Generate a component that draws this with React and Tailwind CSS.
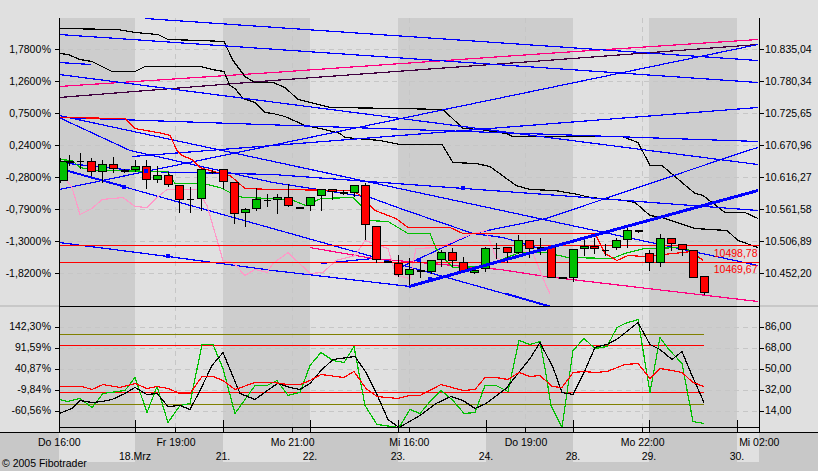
import React from 'react';

const RED = '#ff0000';
const BLUE = '#0000ff';
const GREEN = '#00c000';

// day bands behind the plot, width + shade
const bands = [
  { w: 76, d: true },
  { w: 88, d: false },
  { w: 87, d: true },
  { w: 88, d: false },
  { w: 175, d: true },
  { w: 76, d: false },
  { w: 88, d: true },
  { w: 22, d: false },
];

// same days on the time axis, shade is flipped there
const axisDays = [
  { w: 76, d: false, t: '18.Mrz' },
  { w: 88, d: true, t: '21.' },
  { w: 87, d: false, t: '22.' },
  { w: 88, d: true, t: '23.' },
  { w: 88, d: false, t: '24.' },
  { w: 87, d: true, t: '28.' },
  { w: 76, d: false, t: '29.' },
  { w: 88, d: true, t: '30.' },
  { w: 22, d: false, t: '' },
];

const times = ['Do 16:00', 'Fr 19:00', 'Mo 21:00', 'Mi 16:00', 'Do 19:00', 'Mo 22:00', 'Mi 02:00'];

const leftTop = ['1,7800 %', '1,2600 %', '0,7500 %', '0,2400 %', '-0,2800 %', '-0,7900 %', '-1,3000 %', '-1,8200 %'];
const rightTop = ['10.835,04', '10.780,34', '10.725,65', '10.670,96', '10.616,27', '10.561,58', '10.506,89', '10.452,20'];
const leftBottom = ['142,30 %', '91,59 %', '40,87 %', '-9,84 %', '-60,56 %'];
const rightBottom = ['86,00', '68,00', '50,00', '32,00', '14,00'];

const gridTop = [49, 81, 113, 145, 177, 209, 241, 273];
const gridBottom = [327, 348, 369, 390, 411];
const gridX = [175, 292, 409, 525, 642];
const dayX = [135, 223, 310, 398, 486, 573, 649, 737];

const blueThin = [
  [[145, 18], [758, 60.5]],
  [[59, 34], [758, 82]],
  [[59, 62], [91, 64.5]],
  [[59, 74.5], [758, 164.5]],
  [[59, 117], [758, 141.5]],
  [[59, 115], [758, 265]],
  [[59, 117], [130, 150], [273, 182], [370, 197], [406, 210], [473, 233], [503, 237], [546, 250]],
  [[59, 162], [143, 171.5], [273, 174], [546, 194], [758, 210.7]],
  [[59, 189], [758, 44.5]],
  [[132, 156], [758, 107.3]],
  [[398, 268], [473, 233], [546, 218], [748, 150], [758, 147]],
  [[321, 263], [373, 258]],
  [[59, 242], [168, 256], [273, 270], [410, 286]],
  [[59, 168], [550, 306]],
];
const blueMid = [
  [[59, 168], [124, 186]],
  [[505, 293.5], [550, 306]],
];
const blueThick = [[[409, 286], [546, 248], [758, 190]]];
const markers = [[124, 187], [146, 171], [168, 256], [419, 260], [430, 279], [463, 188]];

const black1 = [[59, 28], [118, 29], [135, 32], [158, 34], [168, 39], [200, 40], [224, 41.5], [233, 60], [245, 76], [255, 82], [273, 82], [285, 87], [298, 99], [330, 107], [400, 108], [443, 109], [463, 128], [480, 129], [506, 133], [513, 136], [595, 136]];
const black1b = [[622, 136.7], [638, 142], [650, 165], [662, 165], [695, 193], [703, 195], [725, 212], [745, 212], [758, 218]];
const black2 = [[59, 53], [68, 54], [80, 59], [92, 61], [112, 71], [135, 71], [145, 66], [200, 66], [212, 69], [224, 71], [230, 85], [235, 88], [243, 98], [255, 102], [265, 112], [273, 113], [285, 116], [305, 125], [325, 129], [340, 133], [345, 137], [380, 140], [400, 144], [442, 144], [453, 162], [476, 163], [490, 166], [516, 185], [530, 189], [555, 190], [578, 194], [590, 197], [602, 198], [625, 200], [635, 202], [650, 215], [662, 217], [695, 228], [727, 230], [738, 240], [758, 247]];
const maRed = [[59, 117.5], [125, 118], [135, 128], [163, 133], [170, 135], [177, 150], [182, 155], [192, 159], [200, 167], [213, 171], [230, 175], [245, 188], [273, 189], [353, 190], [363, 197], [375, 210], [396, 218], [408, 227], [450, 227], [463, 233], [595, 233], [605, 253], [617, 260], [628, 255], [645, 256], [692, 251], [703, 260]];
const maGreen = [[59, 159], [72, 160], [80, 167], [97, 170], [167, 171], [175, 183], [197, 183], [207, 184], [220, 187], [230, 192], [243, 197], [273, 198], [293, 200], [306, 205], [321, 198], [353, 197], [361, 205], [368, 220], [388, 221], [408, 233], [430, 233], [436, 248], [446, 260], [453, 267], [463, 267], [486, 265], [520, 252], [545, 252], [568, 257], [612, 258], [625, 253], [645, 248], [685, 247], [703, 260]];
const softPink = [[59, 160], [63, 175], [72, 187], [80, 214], [92, 208], [102, 199], [123, 197], [135, 206], [147, 207], [157, 197], [167, 189], [197, 189], [207, 205], [223, 260], [233, 262], [245, 275], [255, 269], [267, 272], [273, 263], [288, 252], [310, 273], [323, 272], [336, 260], [355, 255], [365, 240], [388, 248], [396, 275], [410, 278], [416, 248], [440, 247], [460, 238], [473, 233], [486, 230], [496, 257], [506, 262], [520, 250], [533, 253], [546, 285], [550, 293]];

const oscBlack = [[59, 413.5], [72, 408], [80, 400], [92, 402], [102, 401], [112, 399], [125, 393], [135, 387], [147, 394], [157, 393], [168, 406], [180, 405], [190, 409], [200, 390], [212, 365], [223, 352], [240, 393], [255, 399], [273, 386], [278, 383], [290, 387], [300, 389], [310, 383], [321, 370], [333, 359], [355, 356], [366, 372], [376, 392], [388, 419], [399, 427], [420, 415], [436, 403], [451, 396], [463, 400], [475, 408], [486, 403], [506, 388], [530, 358], [540, 342], [553, 367], [562, 392], [573, 394], [584, 372], [595, 347], [607, 344], [618, 338], [638, 322], [650, 344], [660, 349], [672, 359], [682, 351], [692, 375], [704, 402]];
const oscGreen = [[59, 399], [68, 401], [80, 398], [92, 407], [103, 393], [125, 390], [135, 377], [147, 412], [157, 386], [168, 422], [180, 405], [190, 403], [202, 344], [213, 344], [223, 368], [235, 413], [255, 385], [267, 385], [277, 380], [288, 395], [300, 392], [310, 365], [321, 352], [333, 360], [344, 362], [354, 346], [365, 405], [377, 424], [399, 427], [410, 409], [420, 413], [430, 401], [441, 390], [453, 400], [464, 413], [475, 412], [485, 385], [496, 385], [508, 391], [519, 340], [530, 344], [540, 341], [545, 368], [551, 405], [562, 427], [573, 350], [584, 338], [595, 348], [607, 346], [617, 327], [625, 323], [638, 319], [650, 392], [660, 337], [668, 348], [682, 363], [693, 421], [704, 423]];
const oscRed = [[59, 386], [82, 386], [92, 389], [103, 384], [120, 387], [135, 383], [147, 388], [157, 386], [168, 388], [180, 393], [190, 393], [202, 376], [213, 376], [223, 380], [235, 389], [255, 382], [273, 382], [288, 384], [300, 384], [310, 380], [321, 374], [344, 377], [354, 371], [366, 388], [377, 396], [398, 398], [410, 395], [420, 395], [441, 384], [463, 390], [475, 389], [485, 377], [496, 377], [508, 379], [519, 372], [530, 376], [540, 375], [552, 386], [562, 387], [573, 372], [584, 371], [595, 372], [607, 371], [625, 364], [638, 363], [650, 378], [660, 368], [672, 370], [682, 372], [693, 382], [704, 386]];

// x, wick top, wick bottom, body top, body bottom, colour ('' = doji, 'n' = thin doji)
const candles = [
  [60, 158, 182, 161, 180, 'g'], [69, 155, 165, 161, 161, ''], [80, 153, 168, 161, 161, 'n'], [91, 158, 175, 161, 171, 'r'],
  [102, 160, 182, 164, 171, 'g'], [113, 157, 172, 164, 168, 'r'], [124, 169, 172, 170, 170, ''], [135, 160, 171, 166, 169, 'g'],
  [146, 160, 188, 166, 179, 'r'], [157, 166, 182, 175, 179, 'g'], [168, 172, 186, 175, 184, 'r'], [179, 185, 212, 185, 199, 'r'],
  [190, 187, 212, 199, 199, 'n'], [201, 169, 210, 169, 198, 'g'], [212, 170, 173, 172, 172, 'n'], [223, 169, 188, 169, 181, 'r'],
  [234, 182, 223, 182, 213, 'r'], [245, 208, 226, 209, 212, 'g'], [256, 188, 210, 199, 208, 'g'], [267, 194, 206, 200, 200, 'n'],
  [277, 194, 213, 197, 199, 'g'], [288, 184, 206, 197, 205, 'r'], [299, 207, 207, 207, 207, ''], [310, 197, 210, 197, 205, 'g'],
  [321, 189, 210, 189, 195, 'g'], [332, 189, 199, 189, 191, 'r'], [343, 190, 194, 192, 192, ''], [354, 185, 196, 185, 192, 'g'],
  [365, 183, 239, 185, 224, 'r'], [376, 226, 262, 226, 259, 'r'], [387, 261, 261, 261, 261, ''], [398, 255, 276, 263, 274, 'r'],
  [409, 258, 286, 269, 274, 'g'], [420, 260, 277, 270, 270, ''], [431, 260, 273, 260, 271, 'g'], [441, 250, 266, 252, 259, 'g'],
  [452, 248, 266, 252, 260, 'r'], [463, 257, 272, 262, 271, 'r'], [474, 270, 273, 270, 272, 'g'], [485, 247, 271, 248, 268, 'g'],
  [496, 243, 258, 248, 248, 'n'], [507, 247, 262, 247, 252, 'r'], [518, 235, 253, 240, 252, 'g'], [529, 240, 257, 240, 248, 'r'],
  [540, 238, 254, 247, 247, ''], [551, 247, 277, 247, 277, 'r'], [562, 277, 277, 277, 277, ''], [573, 249, 281, 249, 277, 'g'],
  [584, 239, 255, 246, 248, 'g'], [594, 238, 253, 246, 248, 'r'], [605, 244, 255, 250, 250, 'n'], [616, 238, 249, 240, 247, 'g'],
  [627, 228, 247, 230, 239, 'g'], [638, 230, 232, 230, 230, ''], [649, 250, 270, 253, 262, 'r'], [660, 234, 266, 238, 262, 'g'],
  [671, 238, 250, 238, 243, 'r'], [682, 244, 255, 244, 249, 'r'], [693, 250, 277, 250, 277, 'r'], [704, 276, 294, 276, 292, 'r'],
];

// snap y to the pixel centre so flat stretches stay one pixel high
const pts = (a) => a.map(([x, y]) => `${x},${Math.floor(y) + 0.5}`).join(' ');

function Line({ points, color, w = 1.2 }) {
  return <polyline points={pts(points)} fill="none" stroke={color} strokeWidth={w} />;
}

function Candle({ c }) {
  const [x, wt, wb, bt, bb, kind] = c;
  const fill = kind === 'r' ? RED : GREEN;
  return (
    <g>
      <line x1={x + 0.5} x2={x + 0.5} y1={wt} y2={wb + 1} stroke="#000" />
      {kind === '' && <rect x={x - 3} y={bt} width={8} height={2} fill="#000" />}
      {kind === 'n' && <line x1={x - 3} x2={x + 4} y1={bt + 0.5} y2={bt + 0.5} stroke="#000" />}
      {(kind === 'r' || kind === 'g') && (
        <rect x={Math.max(x - 3.5, 59.5)} y={bt + 0.5} width={8} height={bb - bt} fill={fill} stroke="#000" />
      )}
    </g>
  );
}

function PlotLines() {
  return (
    <svg width="818" height="471" viewBox="0 0 818 471" shapeRendering="crispEdges" className="absolute left-0 top-0">
      {gridTop.concat(gridBottom).map((y) => (
        <line key={y} x1="59" x2="759" y1={y + 0.5} y2={y + 0.5} stroke="#c6c6c6" strokeDasharray="5 4" />
      ))}
      {gridX.map((x) => (
        <line key={x} x1={x + 0.5} x2={x + 0.5} y1="18" y2="432" stroke="#c6c6c6" strokeDasharray="5 4" />
      ))}

      <Line points={[[59, 86.5], [273, 72], [546, 53.5], [758, 39.3]]} color="#ff0080" />
      <Line points={[[59, 97.5], [273, 80.5], [546, 60.5], [758, 44.5]]} color="#400040" />
      <Line points={black1} color="#000" />
      <Line points={black1b} color="#000" />
      <Line points={black2} color="#000" />
      {blueThin.map((l, i) => <Line key={i} points={l} color={BLUE} />)}
      {blueMid.map((l, i) => <Line key={i} points={l} color={BLUE} w={2} />)}
      <Line points={[[310, 247], [373, 258], [500, 269], [546, 276], [758, 301]]} color="#ff0080" />
      <Line points={softPink} color="#ff99c8" />
      <Line points={maGreen} color={GREEN} />
      <Line points={maRed} color={RED} />
      <Line points={[[59, 245], [759, 245]]} color={RED} w={1} />
      <Line points={[[59, 262], [759, 262]]} color={RED} w={1} />
      {candles.map((c) => <Candle key={c[0]} c={c} />)}
      {blueThick.map((l, i) => <Line key={i} points={l} color={BLUE} w={3} />)}
      {markers.map(([x, y]) => <rect key={x} x={x - 2} y={y - 2} width="4" height="4" fill={BLUE} />)}

      <Line points={[[59, 334], [704, 334]]} color="#808000" w={1} />
      <Line points={[[59, 404], [704, 404]]} color="#808000" w={1} />
      <Line points={[[59, 345], [704, 345]]} color={RED} w={1} />
      <Line points={[[59, 392], [704, 392]]} color={RED} w={1} />
      <Line points={oscGreen} color={GREEN} />
      <Line points={oscBlack} color="#000" />
      <Line points={oscRed} color={RED} />

      {/* axis frame and ticks */}
      <line x1="59.5" x2="59.5" y1="18" y2="432" stroke="#000" />
      <line x1="759.5" x2="759.5" y1="18" y2="432" stroke="#000" />
      <line x1="59" x2="760" y1="306.5" y2="306.5" stroke="#000" />
      <line x1="59" x2="760" y1="427.5" y2="427.5" stroke="#000" />
      <line x1="0" x2="818" y1="432.5" y2="432.5" stroke="#000" />
      {gridTop.concat(gridBottom).map((y) => (
        <g key={y}>
          <line x1="55" x2="59" y1={y + 0.5} y2={y + 0.5} stroke="#000" />
          <line x1="760" x2="764" y1={y + 0.5} y2={y + 0.5} stroke="#000" />
        </g>
      ))}
      {dayX.map((x) => <line key={x} x1={x + 0.5} x2={x + 0.5} y1="420" y2="432" stroke="#000" />)}
      {gridX.map((x) => <line key={x} x1={x + 0.5} x2={x + 0.5} y1="427" y2="432" stroke="#000" />)}

      <text x="757.5" y="256.5" textAnchor="end" fill={RED} fontSize="10.5" fontFamily="Liberation Sans, sans-serif">10498,78</text>
      <text x="757.5" y="273" textAnchor="end" fill={RED} fontSize="10.5" fontFamily="Liberation Sans, sans-serif">10469,67</text>
    </svg>
  );
}

function AxisLabels({ items, step, align }) {
  return (
    <div className={align === 'right' ? 'flex flex-col items-end pr-[8px] [word-spacing:-2.5px]' : 'flex flex-col items-start pl-[6px]'}>
      {items.map((t) => (
        <div key={t} className="leading-none flex items-center whitespace-nowrap" style={{ height: step }}>{t}</div>
      ))}
    </div>
  );
}

export default function App() {
  return (
    <div className="relative w-[818px] h-[471px] overflow-hidden bg-[#e0e0e0] text-[10.5px] text-black font-['Liberation_Sans',Arial,sans-serif]">
      <div className="h-[18px]" />
      <div className="flex h-[414px]">
        <div className="w-[59px] flex flex-col">
          <div className="h-[287px] pt-[15px]">
            <AxisLabels items={leftTop} step={32} align="right" />
          </div>
          <div className="h-[2px] bg-[#c8c8c8]" />
          <div className="pt-[9px]">
            <AxisLabels items={leftBottom} step={21} align="right" />
          </div>
        </div>
        <div className="w-[700px] flex">
          {bands.map((b, i) => (
            <div key={i} className={b.d ? 'bg-[#cdcdcd]' : 'bg-[#e0e0e0]'} style={{ width: b.w }} />
          ))}
        </div>
        <div className="flex-1 flex flex-col">
          <div className="h-[287px] pt-[15px]">
            <AxisLabels items={rightTop} step={32} align="left" />
          </div>
          <div className="h-[2px] bg-[#c8c8c8]" />
          <div className="pt-[9px]">
            <AxisLabels items={rightBottom} step={21} align="left" />
          </div>
        </div>
      </div>

      {/* time axis */}
      <div className="bg-[#c8c8c8] h-[39px]">
        <div className="relative h-[30px] pl-[59px] flex">
          {axisDays.map((a) => (
            <div key={a.w + a.t} className={a.d ? 'flex justify-end items-end pb-[1px] leading-none' : 'bg-[#e0e0e0] flex justify-end items-end pb-[1px] leading-none'} style={{ width: a.w }}>
              <span className="translate-x-1/2 whitespace-nowrap">{a.t}</span>
            </div>
          ))}
          <div className="absolute left-[1px] top-[5px] flex leading-none">
            {times.map((t) => (
              <div key={t} className="w-[116.67px] text-center whitespace-nowrap">{t}</div>
            ))}
          </div>
        </div>
        <div className="relative -mt-[4px] pl-[2px] leading-none whitespace-nowrap">© 2005 Fibotrader</div>
      </div>
      <PlotLines />
    </div>
  );
}
